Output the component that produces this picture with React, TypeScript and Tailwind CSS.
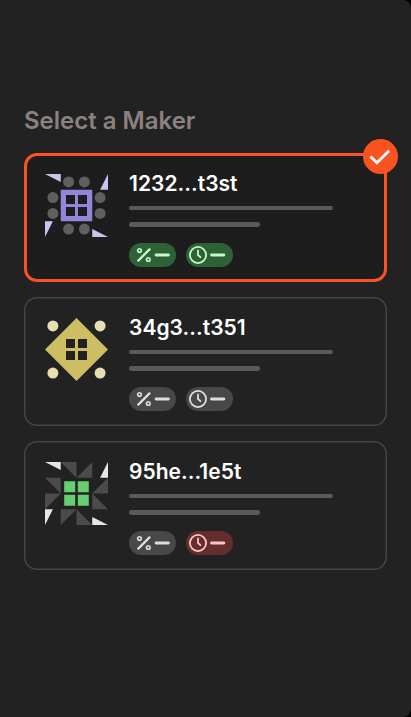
import React from "react";

type Tone = "green" | "gray" | "red";

const tones: Record<Tone, string> = {
  green: "bg-[#2f6137] text-[#c5f8cb]",
  gray: "bg-[#484848] text-[#dedede]",
  red: "bg-[#642e2e] text-[#fcc5c5]",
};

function Corners({ fill }: { fill: string }) {
  return (
    <path
      fill={fill}
      d="M0 0H15.75V7.9ZM63 0V15.75H55.1ZM63 63H47.25V55.1ZM0 63V47.25H7.9Z"
    />
  );
}

function PurpleIdenticon() {
  const dots = [
    [23.6, 7.9], [39.4, 7.9], [55.1, 23.6], [55.1, 39.4],
    [39.4, 55.1], [23.6, 55.1], [7.9, 39.4], [7.9, 23.6],
  ];
  return (
    <svg className="size-[63px] shrink-0" viewBox="0 0 63 63">
      <Corners fill="#cbc4ee" />
      {dots.map(([x, y]) => (
        <circle key={`${x}-${y}`} cx={x} cy={y} r="5.5" fill="#5f5f5f" />
      ))}
      <path
        fill="#9585da"
        fillRule="evenodd"
        d="M15.75 15.75H47.25V47.25H15.75ZM21 21V30H30V21ZM33 21V30H42V21ZM21 33V42H30V33ZM33 33V42H42V33Z"
      />
    </svg>
  );
}

function YellowIdenticon() {
  return (
    <svg className="size-[63px] shrink-0" viewBox="0 0 63 63">
      <g fill="#e7dfb0">
        <circle cx="7.9" cy="7.9" r="5.5" />
        <circle cx="55.1" cy="7.9" r="5.5" />
        <circle cx="7.9" cy="55.1" r="5.5" />
        <circle cx="55.1" cy="55.1" r="5.5" />
      </g>
      <path
        fill="#cdbe64"
        fillRule="evenodd"
        d="M31.5 0L63 31.5L31.5 63L0 31.5ZM21 21V30H30V21ZM33 21V30H42V21ZM21 33V42H30V33ZM33 33V42H42V33Z"
      />
    </svg>
  );
}

function GreenIdenticon() {
  return (
    <svg className="size-[63px] shrink-0" viewBox="0 0 63 63">
      <Corners fill="#e6e6e6" />
      <path
        fill="#4b4b4b"
        d="M15.75 0H31.5V15.75ZM47.25 0V15.75H31.5ZM0 15.75H15.75V31.5ZM0 31.5H15.75L0 47.25ZM63 15.75V31.5H47.25ZM47.25 31.5L63 47.25H47.25ZM15.75 47.25H31.5L15.75 63ZM31.5 47.25L47.25 63H31.5Z"
      />
      <path fill="#68cf70" d="M19.2 19.2H30.2V30.2H19.2ZM32.8 19.2H43.8V30.2H32.8ZM19.2 32.8H30.2V43.8H19.2ZM32.8 32.8H43.8V43.8H32.8Z" />
    </svg>
  );
}

function Pill({ tone, kind }: { tone: Tone; kind: "percent" | "clock" }) {
  return (
    <div className={`h-6 w-[46.5px] rounded-full ${tones[tone]}`}>
      <svg className="block h-6 w-[46.5px]" viewBox="0 0 46.5 24" fill="none" stroke="currentColor" strokeLinecap="round" strokeLinejoin="round">
        {kind === "percent" ? (
          <g strokeWidth="1.6">
            <path strokeWidth="2.3" d="M9.3 17.6L20.5 6.4" />
            <circle cx="10.5" cy="7.6" r="1.8" />
            <circle cx="19.3" cy="16.5" r="1.8" />
          </g>
        ) : (
          <g strokeWidth="1.8">
            <circle cx="12" cy="12" r="8.1" />
            <path d="M12 7.5V12L14.4 14.2" />
          </g>
        )}
        <path strokeWidth="2.8" d={kind === "percent" ? "M27 12H39.4" : "M25.5 12H37.9"} />
      </svg>
    </div>
  );
}

interface MakerProps {
  name: string;
  icon: React.ReactNode;
  percent: Tone;
  clock: Tone;
  selected?: boolean;
}

function MakerCard({ name, icon, percent, clock, selected }: MakerProps) {
  return (
    <div
      className={`relative flex h-[129px] gap-[21px] rounded-[13px] ${
        selected
          ? "border-3 border-[#fa5220] bg-[#1d1d1d] pt-[18px] pl-[18px]"
          : "bg-[#222222] pt-[21px] pl-[21px] shadow-[inset_0_0_0_1.5px_#454545]"
      }`}
    >
      {icon}
      <div className="flex flex-col">
        <div className="-mt-[2px] h-[24px] text-[21px] leading-6 font-semibold tracking-[0.03px] whitespace-nowrap text-white">{name}</div>
        <div className="mt-[9.5px] h-[4.5px] w-[204px] rounded-full bg-[#5a5a5a]" />
        <div className="mt-3 h-[4.5px] w-[130.5px] rounded-full bg-[#5a5a5a]" />
        <div className="mt-[16.5px] flex gap-[10.5px]">
          <Pill tone={percent} kind="percent" />
          <Pill tone={clock} kind="clock" />
        </div>
      </div>
      {selected && (
        <div className="absolute -top-[17px] -right-[13.5px] flex size-[34.5px] items-center justify-center rounded-full bg-[#fa5220]">
          <svg className="size-[34.5px]" viewBox="0 0 35 35" fill="none" stroke="white" strokeWidth="2.8">
            <path d="M7.6 17.8L14.1 24.1L26.5 12" />
          </svg>
        </div>
      )}
    </div>
  );
}

export default function App() {
  return (
    <div className="h-[717px] w-[411px] bg-black font-['Inter',sans-serif]">
      <main className="h-full w-full rounded-r-[8px] bg-[#222222] pt-[106px] pr-6 pl-6">
        <h1 className="h-[30px] text-[24px] leading-[30px] font-semibold text-[#8b8180]">Select a Maker</h1>
        <div className="mt-[17px] flex flex-col gap-[15px]">
          <MakerCard name="1232...t3st" icon={<PurpleIdenticon />} percent="green" clock="green" selected />
          <MakerCard name="34g3...t351" icon={<YellowIdenticon />} percent="gray" clock="gray" />
          <MakerCard name="95he...1e5t" icon={<GreenIdenticon />} percent="gray" clock="red" />
        </div>
      </main>
    </div>
  );
}
